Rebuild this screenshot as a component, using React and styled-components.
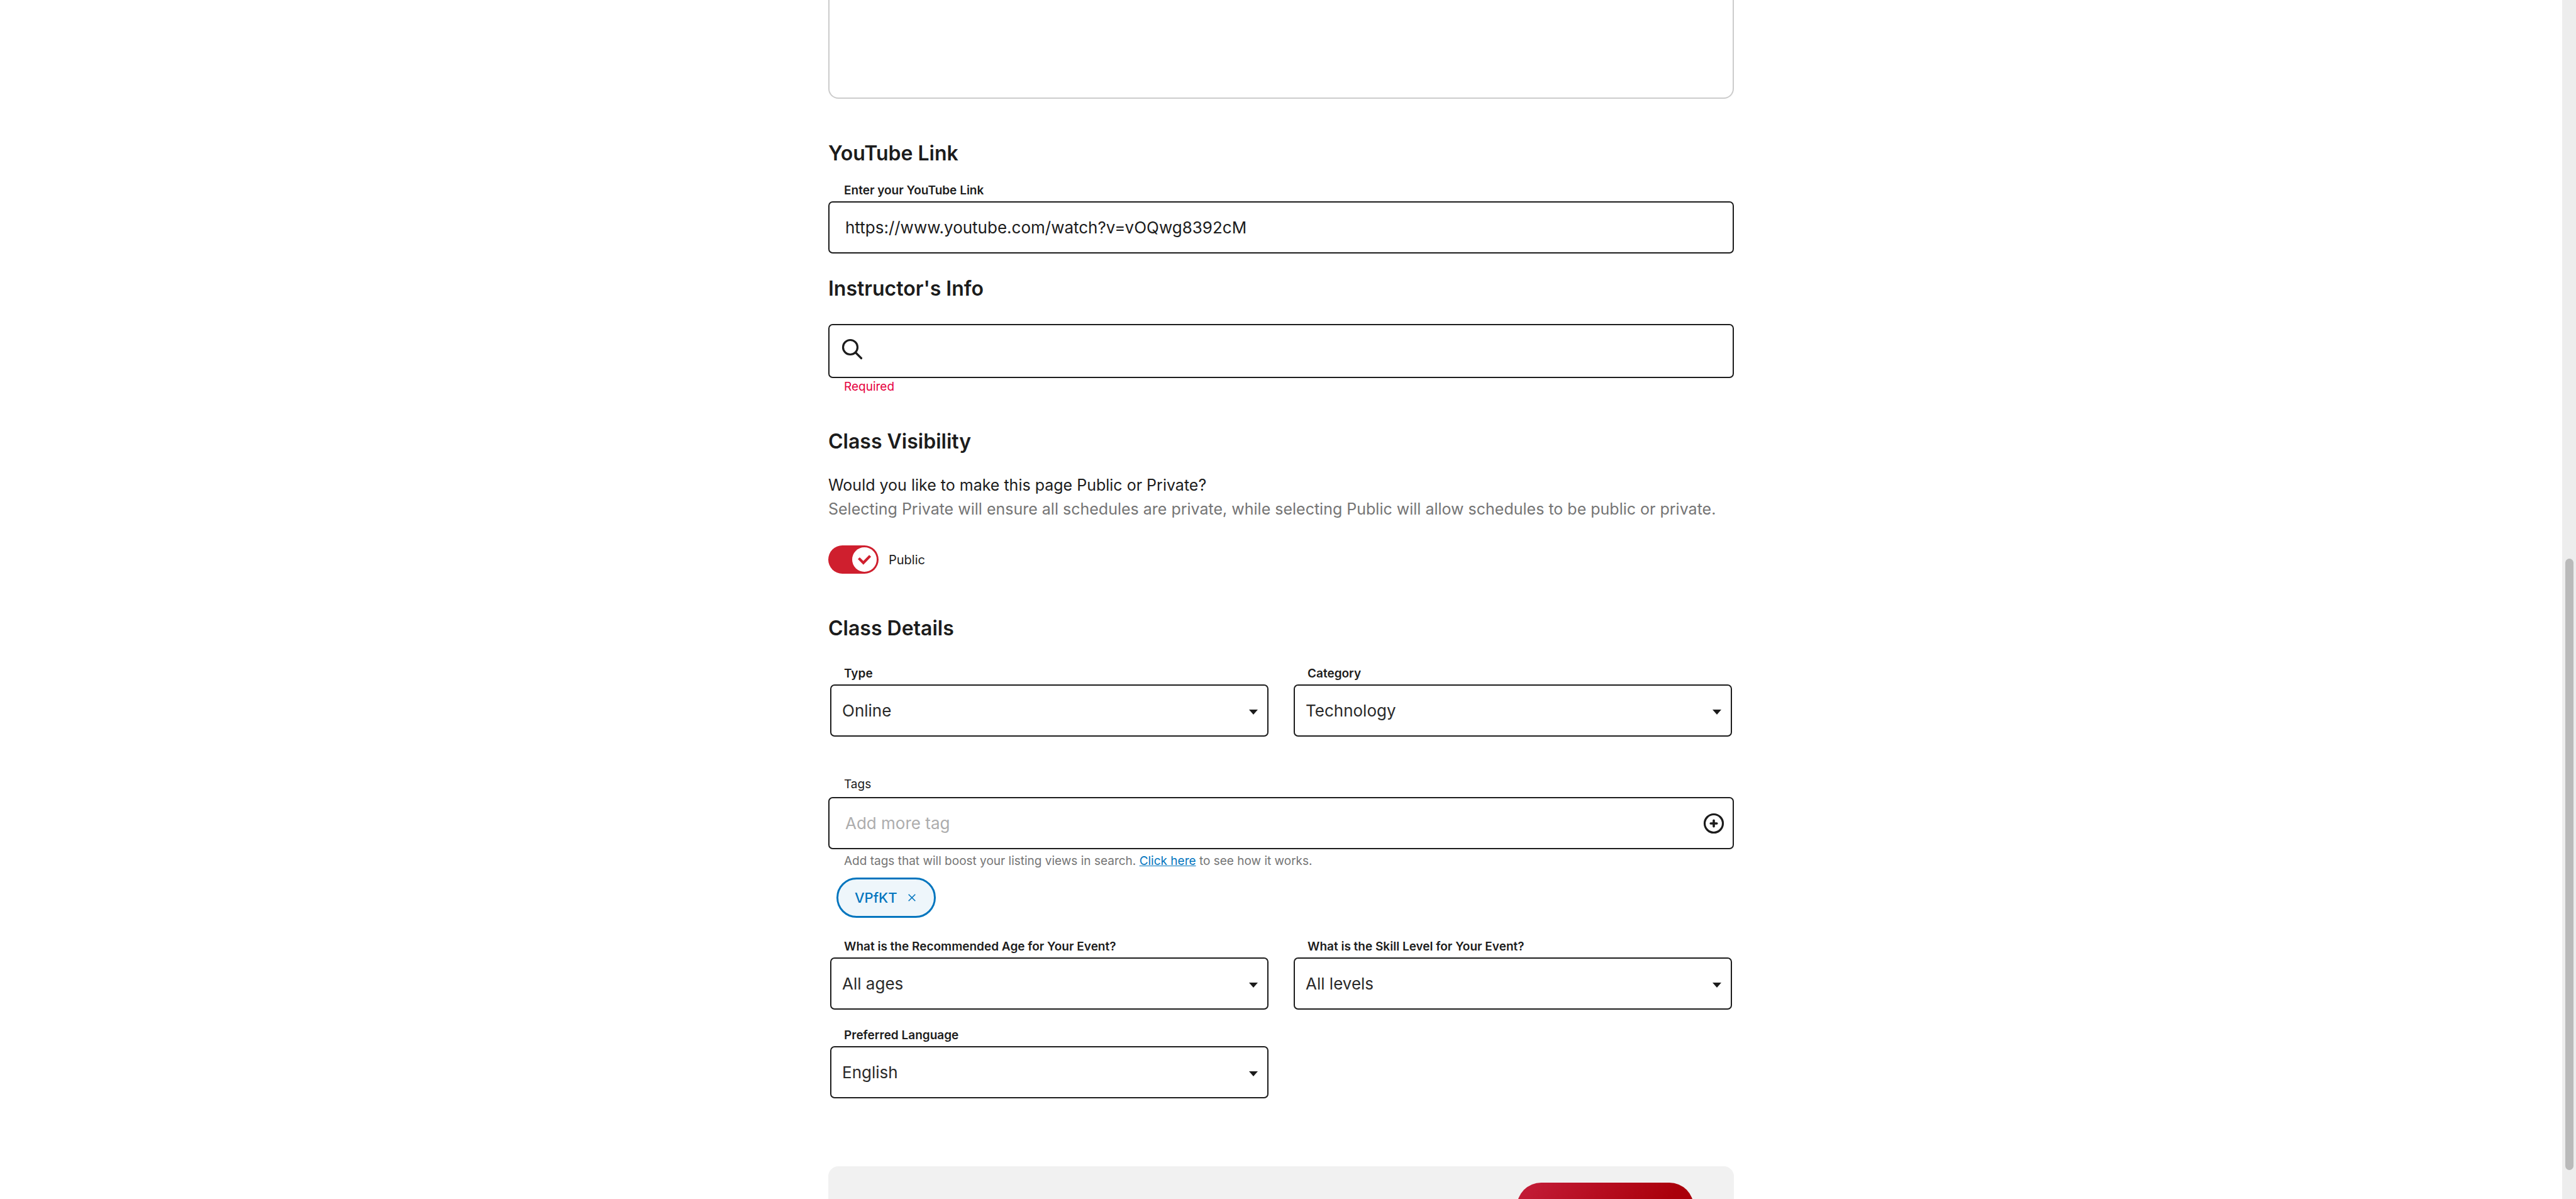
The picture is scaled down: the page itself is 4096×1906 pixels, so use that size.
import React, { useState } from "react";
import styled, { createGlobalStyle } from "styled-components";

const ink = "#1c1c1c";
const muted = "#757575";
const blue = "#0275be";
const red = "#cf1f2e";

const GlobalStyle = createGlobalStyle`
  *, *::before, *::after { box-sizing: border-box; }
  html, body { margin: 0; background: #fff; }
  body, input, select, textarea, button {
    font-family: Inter, "Liberation Sans", sans-serif;
    color: ${ink};
  }
`;

const Page = styled.div`
  display: flex;
  height: 100vh;
  overflow: hidden;
`;

const Content = styled.main`
  flex: 1;
  min-width: 0;
  display: flex;
  justify-content: center;
  align-items: flex-start;
`;

const Form = styled.form`
  width: 100%;
  max-width: 1440px;
  display: flex;
  flex-direction: column;
`;

const ScrollTrack = styled.div`
  flex: none;
  width: 22px;
  display: grid;
  grid-template-rows: 888fr 972fr 46fr;
  justify-content: center;
  background: #ededed;
`;

const ScrollThumb = styled.div`
  grid-row: 2;
  width: 13px;
  border-radius: 7px;
  background: #bababa;
`;

const Description = styled.textarea`
  display: block;
  width: 100%;
  height: 157px;
  padding: 16px 25px;
  border: 2px solid #ccc;
  border-top: none;
  border-radius: 0 0 16px 16px;
  resize: none;
  outline: none;
`;

const Section = styled.section`
  display: flex;
  flex-direction: column;
  margin-top: ${(p) => p.$space}px;
`;

const Heading = styled.h2`
  margin: 0 0 ${(p) => p.$after}px;
  font-size: 32px;
  line-height: 40px;
  font-weight: 600;
`;

const Field = styled.div`
  display: flex;
  flex-direction: column;
  gap: ${(p) => p.$gap || 5}px;
  min-width: 0;
`;

const Label = styled.label`
  padding-left: ${(p) => p.$inset || 25}px;
  font-size: 19px;
  line-height: 24px;
  font-weight: ${(p) => (p.$light ? 400 : 600)};
`;

const Box = styled.div`
  display: flex;
  align-items: center;
  height: ${(p) => p.$height || 83}px;
  border: 2px solid ${ink};
  border-radius: 7px;
  background: #fff;
`;

const TextInput = styled.input`
  flex: 1;
  min-width: 0;
  height: 100%;
  padding: 0 25px;
  border: none;
  outline: none;
  background: transparent;
  font-size: 26px;
  &::placeholder { color: #adadad; opacity: 1; }
`;

const SearchIcon = styled.svg`
  flex: none;
  width: 34px;
  height: 34px;
  margin: 0 0 6px 19px;
`;

const IconButton = styled.button`
  flex: none;
  display: flex;
  padding: 0;
  border: none;
  background: transparent;
  color: inherit;
  cursor: pointer;
`;

const AddButton = styled(IconButton)`
  margin-right: 13px;
`;

const ErrorText = styled.p`
  margin: 2px 0 0;
  padding-left: 25px;
  font-size: 19px;
  line-height: 24px;
  color: #e6003e;
`;

const Paragraph = styled.p`
  margin: 0;
  font-size: 25px;
  line-height: 38px;
  color: ${(p) => (p.$muted ? muted : ink)};
`;

const Switch = styled.label`
  display: flex;
  align-items: center;
  align-self: flex-start;
  gap: 16px;
  margin-top: 39px;
  font-size: 20px;
  cursor: pointer;
`;

const SwitchBody = styled.span`
  display: grid;
  align-items: center;
  width: 80px;
  height: 45px;
  & > * { grid-area: 1 / 1; }
`;

const SwitchInput = styled.input`
  appearance: none;
  width: 80px;
  height: 45px;
  margin: 0;
  border-radius: 23px;
  background: ${(p) => (p.checked ? red : "#9a9a9a")};
`;

const Knob = styled.svg`
  width: 39px;
  height: 39px;
  margin: 0 3px;
  justify-self: ${(p) => (p.$on ? "end" : "start")};
  pointer-events: none;
`;

const Columns = styled.div`
  display: grid;
  grid-template-columns: 1fr 1fr;
  gap: 29px 40px;
  padding: 0 3px;
`;

const SelectBox = styled.div`
  display: grid;
  align-items: center;
  & > * { grid-area: 1 / 1; }
`;

const Select = styled.select`
  appearance: none;
  width: 100%;
  height: 83px;
  padding: 0 48px 0 17px;
  border: 2px solid ${ink};
  border-radius: 7px;
  background: #fff;
  font-size: 26px;
  color: #2a2a2a;
`;

const Caret = styled.svg`
  justify-self: end;
  width: 14px;
  height: 8px;
  margin: 4px 17px 0 0;
  pointer-events: none;
`;

const Help = styled.p`
  margin: 7px 0 0;
  padding-left: 25px;
  font-size: 19px;
  line-height: 24px;
  color: ${muted};
`;

const Link = styled.a`
  color: ${blue};
  text-decoration: underline;
`;

const Chip = styled.div`
  display: flex;
  align-items: center;
  align-self: flex-start;
  gap: 17px;
  height: 64px;
  margin: 14px 0 34px 13px;
  padding: 0 29px 0 26px;
  border: 3px solid ${blue};
  border-radius: 32px;
  background: #eef6fb;
  color: ${blue};
  font-size: 22px;
  font-weight: 500;
`;

const Footer = styled.footer`
  display: flex;
  justify-content: flex-end;
  margin-top: 108px;
  padding: 26px 64px;
  border-radius: 16px;
  background: #f1f1f1;
`;

const Submit = styled.button`
  width: 281px;
  height: 77px;
  border: none;
  border-radius: 39px;
  background: linear-gradient(135deg, #c41e3a, #aa000a 75%);
`;

function SelectField({ id, label, options }) {
  return (
    <Field>
      <Label htmlFor={id} $inset={22}>{label}</Label>
      <SelectBox>
        <Select id={id} defaultValue={options[0]}>
          {options.map((o) => <option key={o}>{o}</option>)}
        </Select>
        <Caret viewBox="0 0 14 8" aria-hidden="true">
          <path d="M0 0h14L7 8z" fill={ink} />
        </Caret>
      </SelectBox>
    </Field>
  );
}

export default function App() {
  const [isPublic, setPublic] = useState(true);
  const [tags, setTags] = useState(["VPfKT"]);
  return (
    <>
      <GlobalStyle />
      <Page>
        <Content>
          <Form onSubmit={(e) => e.preventDefault()}>
            <Description aria-label="Description" />

            <Section $space={67}>
              <Heading $after={27}>YouTube Link</Heading>
              <Field>
                <Label htmlFor="youtube">Enter your YouTube Link</Label>
                <Box>
                  <TextInput id="youtube" type="text" defaultValue="https://www.youtube.com/watch?v=vOQwg8392cM" />
                </Box>
              </Field>
            </Section>

            <Section $space={36}>
              <Heading $after={36} id="instructor">Instructor's Info</Heading>
              <Box $height={86}>
                <SearchIcon viewBox="0 0 34 34" fill="none" stroke={ink} strokeWidth="3.2" strokeLinecap="round" aria-hidden="true">
                  <circle cx="14" cy="14" r="11.5" />
                  <path d="M22.5 22.5L31.5 31.5" />
                </SearchIcon>
                <TextInput type="text" aria-labelledby="instructor" />
              </Box>
              <ErrorText>Required</ErrorText>
            </Section>

            <Section $space={55}>
              <Heading $after={30}>Class Visibility</Heading>
              <Paragraph>Would you like to make this page Public or Private?</Paragraph>
              <Paragraph $muted>
                Selecting Private will ensure all schedules are private, while selecting Public will allow schedules to be public or private.
              </Paragraph>
              <Switch>
                <SwitchBody>
                  <SwitchInput type="checkbox" checked={isPublic} onChange={(e) => setPublic(e.target.checked)} />
                  <Knob $on={isPublic} viewBox="0 0 39 39" aria-hidden="true">
                    <circle cx="19.5" cy="19.5" r="19.5" fill="#fff" />
                    {isPublic && (
                      <path d="M10.5 17.4L17.8 24.8L28.6 13.6" fill="none" stroke={red} strokeWidth="4.2" />
                    )}
                  </Knob>
                </SwitchBody>
                {isPublic ? "Public" : "Private"}
              </Switch>
            </Section>

            <Section $space={67}>
              <Heading $after={40}>Class Details</Heading>
              <Columns>
                <SelectField id="type" label="Type" options={["Online"]} />
                <SelectField id="category" label="Category" options={["Technology"]} />
              </Columns>
            </Section>

            <Section $space={64}>
              <Field $gap={8}>
                <Label htmlFor="tags" $light>Tags</Label>
                <Box>
                  <TextInput id="tags" type="text" placeholder="Add more tag" />
                  <AddButton type="button" aria-label="Add tag">
                    <svg width="34" height="34" viewBox="0 0 34 34" fill="none" stroke={ink} strokeWidth="3.2" strokeLinecap="round">
                      <circle cx="17" cy="17" r="14.5" />
                      <path d="M17 12.2v9.6M12.2 17h9.6" strokeWidth="3.6" />
                    </svg>
                  </AddButton>
                </Box>
              </Field>
              <Help>
                Add tags that will boost your listing views in search. <Link href="#tags">Click here</Link> to see how it works.
              </Help>
              {tags.map((t) => (
                <Chip key={t}>
                  {t}
                  <IconButton type="button" aria-label={`Remove ${t}`} onClick={() => setTags(tags.filter((x) => x !== t))}>
                    <svg width="12" height="12" viewBox="0 0 12 12" stroke="currentColor" strokeWidth="1.6">
                      <path d="M0.7 0.7L11.3 11.3M11.3 0.7L0.7 11.3" />
                    </svg>
                  </IconButton>
                </Chip>
              ))}
              <Columns>
                <SelectField id="age" label="What is the Recommended Age for Your Event?" options={["All ages"]} />
                <SelectField id="level" label="What is the Skill Level for Your Event?" options={["All levels"]} />
                <SelectField id="language" label="Preferred Language" options={["English"]} />
              </Columns>
            </Section>

            <Footer>
              <Submit type="submit" aria-label="Submit" />
            </Footer>
          </Form>
        </Content>
        <ScrollTrack aria-hidden="true">
          <ScrollThumb />
        </ScrollTrack>
      </Page>
    </>
  );
}
